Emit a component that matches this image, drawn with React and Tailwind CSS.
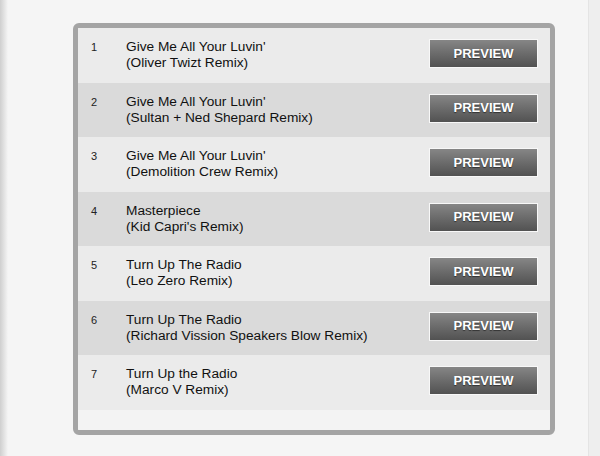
import React from "react";

const tracks = [
  { title: "Give Me All Your Luvin'", mix: "(Oliver Twizt Remix)" },
  { title: "Give Me All Your Luvin'", mix: "(Sultan + Ned Shepard Remix)" },
  { title: "Give Me All Your Luvin'", mix: "(Demolition Crew Remix)" },
  { title: "Masterpiece", mix: "(Kid Capri's Remix)" },
  { title: "Turn Up The Radio", mix: "(Leo Zero Remix)" },
  { title: "Turn Up The Radio", mix: "(Richard Vission Speakers Blow Remix)" },
  { title: "Turn Up the Radio", mix: "(Marco V Remix)" },
];

const App = () => {
  return (
    <main
      className="w-[600px] h-[456px] overflow-hidden flex bg-[#f5f5f5] text-[#111]"
      style={{ fontFamily: '"Liberation Sans", Arial, sans-serif' }}
    >
      <div className="w-[8px] h-full bg-gradient-to-r from-[#cfcfcf] to-[#f5f5f5]"></div>
      <div className="flex-1 pl-[65px] pt-[23px]">
        <div className="w-[482px] border-[5px] border-[#a4a4a4] rounded-[6px] bg-[#f2f2f2] overflow-hidden">
          {tracks.map((t, i) => (
            <div
              key={i}
              className={
                "h-[54.5px] flex items-start pt-[11px] pl-[13px] pr-[12px] " +
                (i % 2 === 0 ? "bg-[#ebebeb]" : "bg-[#dadada]")
              }
            >
              <div className="w-[35px] text-[11px] leading-[16px] text-[#222]">{i + 1}</div>
              <div className="flex-1 text-[13.7px] leading-[16px]">
                <div>{t.title}</div>
                <div>{t.mix}</div>
              </div>
              <button className="w-[109px] h-[29px] border border-[#f8f8f8] bg-gradient-to-b from-[#868686] to-[#525252] text-white font-bold text-[13px] [text-shadow:0_1px_1px_rgba(0,0,0,0.5)]">
                PREVIEW
              </button>
            </div>
          ))}
          <div className="h-[20px] bg-[#f3f3f3]"></div>
        </div>
      </div>
      <div className="w-[12px] h-full bg-[#eeeeee] border-l border-[#e4e4e4]"></div>
    </main>
  );
};

export default App;
